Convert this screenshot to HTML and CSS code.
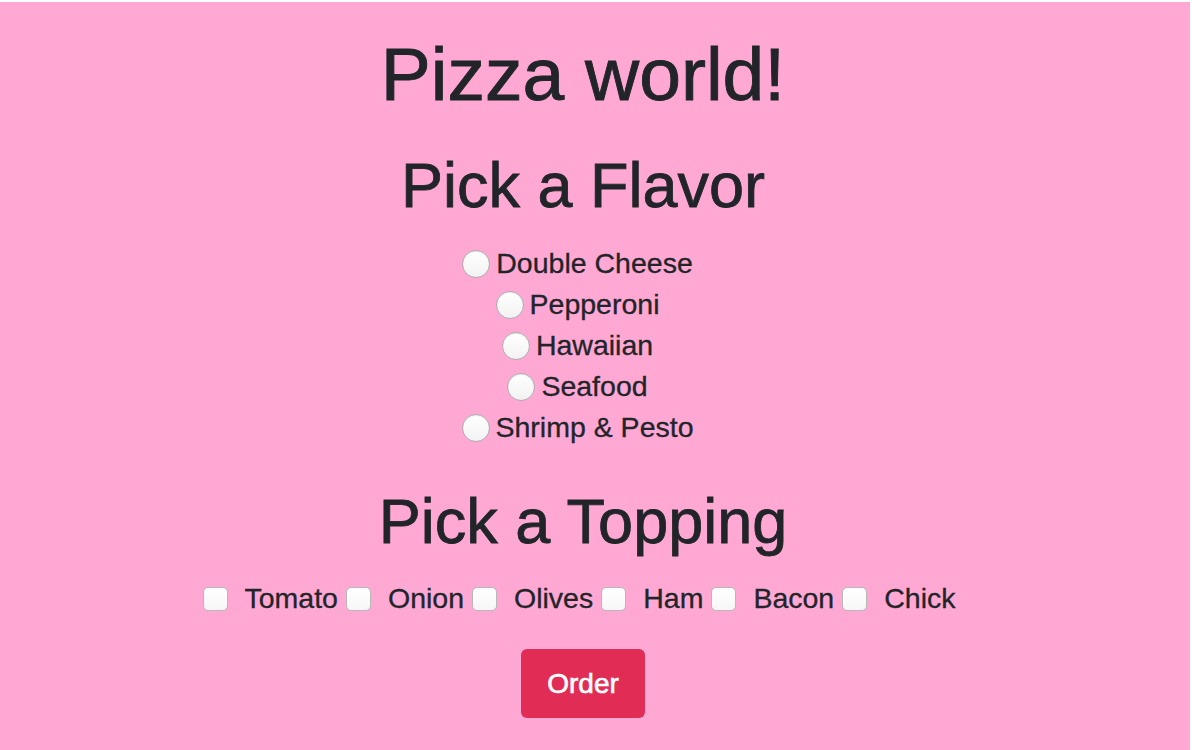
FILE: index.html
```html
<!DOCTYPE html>
<html lang="en">
<head>
    <meta charset="UTF-8">
    <meta name="viewport" content="width=device-width, initial-scale=1.0">
    <title>Pizza world!</title>
    <link rel="stylesheet" href="styles.css">
</head>
<body>
    <div class="page">
        <h1 class="title">Pizza world!</h1>

        <h2 class="section-title">Pick a Flavor</h2>
        <div class="flavors">
            <div class="flavor">
                <input type="radio" name="flavor" id="flavor-cheese">
                <label for="flavor-cheese">Double Cheese</label>
            </div>
            <div class="flavor">
                <input type="radio" name="flavor" id="flavor-pepperoni">
                <label for="flavor-pepperoni">Pepperoni</label>
            </div>
            <div class="flavor">
                <input type="radio" name="flavor" id="flavor-hawaiian">
                <label for="flavor-hawaiian">Hawaiian</label>
            </div>
            <div class="flavor">
                <input type="radio" name="flavor" id="flavor-seafood">
                <label for="flavor-seafood">Seafood</label>
            </div>
            <div class="flavor">
                <input type="radio" name="flavor" id="flavor-shrimp">
                <label for="flavor-shrimp">Shrimp &amp; Pesto</label>
            </div>
        </div>

        <h2 class="section-title topping-title">Pick a Topping</h2>
        <div class="toppings">
            <input type="checkbox" id="top-tomato"><label for="top-tomato">Tomato</label>
            <input type="checkbox" id="top-onion"><label for="top-onion">Onion</label>
            <input type="checkbox" id="top-olives"><label for="top-olives">Olives</label>
            <input type="checkbox" id="top-ham"><label for="top-ham">Ham</label>
            <input type="checkbox" id="top-bacon"><label for="top-bacon">Bacon</label>
            <input type="checkbox" id="top-chick"><label for="top-chick">Chick</label>
        </div>

        <div class="actions">
            <button type="button" class="order-btn">Order</button>
        </div>
    </div>
</body>
</html>
```

FILE: styles.css
```css
html, body {
    margin: 0;
    background: #ffffff;
}
body {
    font-family: "Liberation Sans", Arial, sans-serif;
    color: #212529;
}
.page {
    margin: 2px 2px 0 0;
    min-height: 748px;
    padding: 0 24px 0 0;
    box-sizing: border-box;
    background-color: #ffa8d3;
    text-align: center;
    overflow: hidden;
}
.title {
    margin: 27px 0 0;
    font-size: 75px;
    font-weight: normal;
    line-height: 1.2;
    -webkit-text-stroke: 0.9px #212529;
}
.section-title {
    margin: 29px 0 19px;
    font-size: 63px;
    font-weight: normal;
    line-height: 1.2;
    -webkit-text-stroke: 0.8px #212529;
}
.topping-title {
    margin-top: 36px;
}
.flavor {
    display: flex;
    justify-content: center;
    align-items: center;
    height: 41px;
    font-size: 28.5px;
    -webkit-text-stroke: 0.3px #212529;
}
.flavor label {
    margin: 0 11px 0 6px;
}
input[type="radio"] {
    appearance: none;
    -webkit-appearance: none;
    width: 28px;
    height: 28px;
    margin: 2px 0 0;
    border: 1px solid #aeaeae;
    border-radius: 50%;
    background: linear-gradient(#ffffff, #f2f2f2);
    box-shadow: inset 0 1px 1px rgba(0, 0, 0, 0.08);
}
.toppings {
    display: flex;
    justify-content: center;
    align-items: center;
    height: 41px;
    font-size: 28.5px;
    -webkit-text-stroke: 0.3px #212529;
}
input[type="checkbox"] {
    appearance: none;
    -webkit-appearance: none;
    width: 25px;
    height: 24px;
    margin: 0 17px 0 0;
    border: 1px solid #b8b8b8;
    border-radius: 5px;
    background: linear-gradient(#ffffff, #f6f6f6);
    box-sizing: border-box;
}
.toppings label {
    margin-right: 8px;
}
.actions {
    margin-top: 30px;
}
.order-btn {
    height: 69px;
    padding: 0 26px;
    border: none;
    border-radius: 6px;
    background-color: #e12d56;
    color: #ffffff;
    font-family: "Liberation Sans", Arial, sans-serif;
    font-size: 28px;
    -webkit-text-stroke: 0.6px #ffffff;
    cursor: pointer;
}
```
